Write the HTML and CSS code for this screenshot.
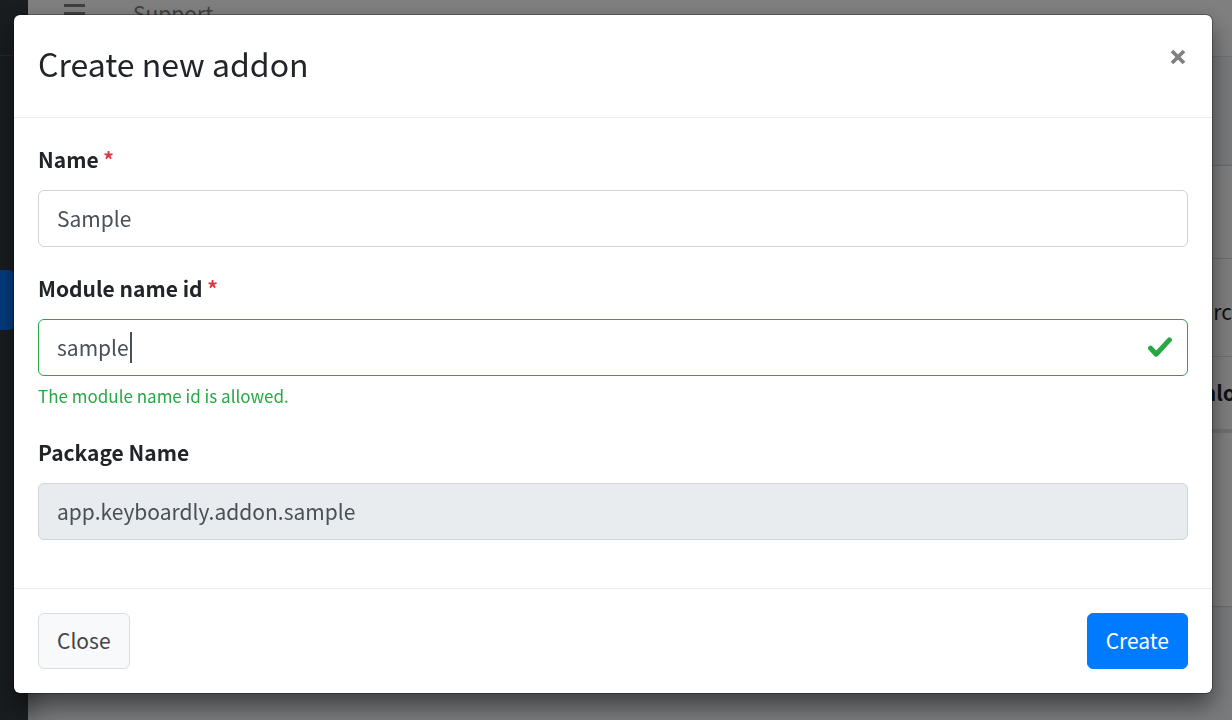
FILE: index.html
```html
<!DOCTYPE html>
<html lang="en">
<head>
<meta charset="utf-8">
<title>Create new addon</title>
<link rel="stylesheet" href="styles.css">
</head>
<body>
<div class="page" aria-hidden="true">
  <aside class="sidebar">
    <div class="brand"></div>
    <div class="nav-active"></div>
  </aside>
  <div class="content">
    <header class="navbar">
      <svg class="bars" width="21" height="22" viewBox="0 0 21 22"><path d="M0 2.5h21M0 10.5h21M0 18.5h21" stroke="currentColor" stroke-width="3"/></svg>
      <span>Support</span>
    </header>
    <main class="card">
      <div class="card-head"></div>
      <div class="card-filter">rc</div>
      <div class="card-columns">nlo</div>
      <div class="card-rows"></div>
    </main>
  </div>
</div>
<div class="backdrop">
  <form class="modal" role="dialog" aria-modal="true" aria-labelledby="title">
    <header class="modal-header">
      <h1 class="modal-title" id="title">Create new addon</h1>
      <button class="dismiss" type="button" aria-label="Dismiss">
        <svg width="16" height="16" viewBox="0 0 16 16"><path d="M2 2l12 12M14 2L2 14" stroke="currentColor" stroke-width="3.8"/></svg>
      </button>
    </header>
    <div class="modal-body">
      <div class="group">
        <label class="label" for="name">Name <span class="required">*</span></label>
        <input class="control" id="name" type="text" value="Sample">
      </div>
      <div class="group">
        <label class="label" for="module">Module name id <span class="required">*</span></label>
        <div class="field">
          <input class="control control-valid" id="module" type="text" value="sample" aria-describedby="feedback">
          <span class="caret"></span>
          <svg class="check" width="24" height="21" viewBox="0 0 24 21"><path d="M2.6 11.2l5.6 6L21.4 2.9" fill="none" stroke="currentColor" stroke-width="5" stroke-linecap="round" stroke-linejoin="round"/></svg>
        </div>
        <div class="feedback" id="feedback">The module name id is allowed.</div>
      </div>
      <div class="group">
        <label class="label" for="package">Package Name</label>
        <input class="control control-readonly" id="package" type="text" value="app.keyboardly.addon.sample" readonly>
      </div>
    </div>
    <footer class="modal-footer">
      <button class="btn btn-light" type="button">Close</button>
      <button class="btn btn-primary" type="submit">Create</button>
    </footer>
  </form>
</div>
</body>
</html>
```

FILE: styles.css
```css
* {
  box-sizing: border-box;
}

body {
  margin: 0;
  overflow: hidden;
  font-family: "Noto Sans CJK SC", "Noto Sans", sans-serif;
  font-size: 21px;
  line-height: 34px;
  color: #212529;
}

.page {
  display: flex;
  min-height: 100vh;
  background: #f4f6f9;
}

.sidebar {
  width: 28px;
  background: #343a40;
  box-shadow: 0 0 28px rgba(0, 0, 0, .5);
}

.brand {
  height: 56px;
  border-bottom: 1px solid #4b545c;
}

.nav-active {
  width: 15px;
  height: 60px;
  margin-top: 214px;
  border-radius: 0 6px 6px 0;
  background: #007bff;
}

.content {
  flex: 1;
}

.navbar {
  display: flex;
  align-items: flex-start;
  gap: 48px;
  height: 57px;
  padding: 3px 36px 0;
  border-bottom: 1px solid #dee2e6;
  background: #fff;
  color: #808080;
  line-height: 20px;
}

.card {
  margin-top: 109px;
  background: #fff;
  box-shadow: 0 0 2px rgba(0, 0, 0, .4);
  text-align: right;
}

.card-head {
  height: 93px;
  border-bottom: 1px solid #dedede;
}

.card-filter {
  height: 98px;
  padding-top: 35px;
  border-bottom: 1px solid #dee2e6;
}

.card-columns {
  height: 76px;
  margin-right: -4px;
  padding-top: 18px;
  border-bottom: 4px solid #dee2e6;
  font-weight: 700;
}

.card-rows {
  height: 173px;
}

.backdrop {
  position: fixed;
  inset: 0;
  padding: 15px 20px 27px 14px;
  background: rgba(0, 0, 0, .5);
}

.modal {
  border-radius: 6px;
  background: #fff;
  box-shadow: 0 0 0 1px rgba(0, 0, 0, .3), 0 12px 24px rgba(0, 0, 0, .5);
}

.modal-header {
  display: flex;
  justify-content: space-between;
  align-items: flex-start;
  padding: 24px 24px 30px;
  border-bottom: 1px solid #e9ecef;
}

.modal-title {
  margin: 0;
  font-size: 32px;
  font-weight: 400;
  line-height: 48px;
}

.dismiss {
  display: flex;
  padding: 10px 2px;
  border: 0;
  background: none;
  color: #808080;
}

.modal-body {
  padding: 24px;
}

.group {
  margin-bottom: 24px;
}

.label {
  display: block;
  margin-bottom: 14px;
  font-weight: 700;
}

.required {
  color: #dc3545;
}

.field {
  position: relative;
}

.control {
  display: block;
  width: 100%;
  height: 57px;
  padding: 8px 18px 10px;
  border: 1px solid #ced4da;
  border-radius: 6px;
  background: #fff;
  color: #495057;
  font: inherit;
  outline: 0;
}

.control-valid {
  padding-right: 56px;
  border-color: #28a745;
}

.control-readonly {
  background: #e9ecef;
}

.caret {
  position: absolute;
  top: 13px;
  left: 92px;
  width: 2px;
  height: 31px;
  background: #495057;
}

.check {
  position: absolute;
  top: 18px;
  right: 16px;
  color: #28a745;
}

.feedback {
  padding: 6px 0 2px;
  font-size: 17px;
  line-height: 27px;
  color: #28a745;
}

.modal-footer {
  display: flex;
  justify-content: space-between;
  padding: 24px;
  border-top: 1px solid #e9ecef;
}

.btn {
  height: 56px;
  padding: 0 18px 2px;
  border: 1px solid #007bff;
  border-radius: 6px;
  font: inherit;
}

.btn-light {
  border-color: #ddd;
  background: #f8f9fa;
  color: #444;
}

.btn-primary {
  background: #007bff;
  color: #fff;
}
```
